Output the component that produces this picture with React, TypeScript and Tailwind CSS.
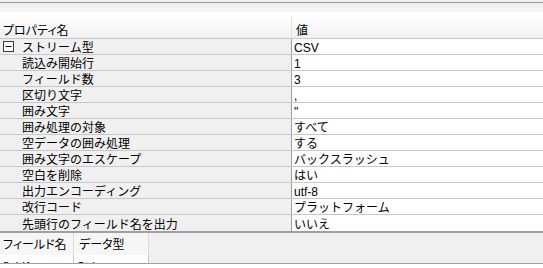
import React from "react";

const rows: { label: string; value: string; group?: boolean }[] = [
  { label: "ストリーム型", value: "CSV", group: true },
  { label: "読込み開始行", value: "1" },
  { label: "フィールド数", value: "3" },
  { label: "区切り文字", value: "," },
  { label: "囲み文字", value: "\"" },
  { label: "囲み処理の対象", value: "すべて" },
  { label: "空データの囲み処理", value: "する" },
  { label: "囲み文字のエスケープ", value: "バックスラッシュ" },
  { label: "空白を削除", value: "はい" },
  { label: "出力エンコーディング", value: "utf-8" },
  { label: "改行コード", value: "プラットフォーム" },
  { label: "先頭行のフィールド名を出力", value: "いいえ" },
];

const font = "font-['Liberation_Sans','Noto_Sans_CJK_JP',sans-serif]";
const palt = "[font-feature-settings:'palt']";

function MinusBox() {
  return (
    <svg width="11" height="11" viewBox="0 0 11 11" className="shrink-0">
      <rect x="0.5" y="0.5" width="10" height="10" fill="#fff" stroke="#3c3c3c" />
      <line x1="2.5" y1="5.5" x2="8.5" y2="5.5" stroke="#000" />
    </svg>
  );
}

export default function App() {
  return (
    <div className={`w-[543px] h-[268px] overflow-hidden bg-white text-[12px] text-black ${font}`}>
      {/* top strip */}
      <div className="h-[2px] bg-[#f0f0f0]" />
      <div className="h-px bg-[#a0a0a8]" />
      <div className="h-[5px] bg-[#f0f0f0]" />
      <div className="h-[4px] bg-[#f6f6f6]" />
      <div className="h-[4px] bg-white" />

      {/* header */}
      <div className={`flex h-[23px] border-b border-[#c8c8c8] bg-gradient-to-b from-white to-[#f1f1f3] ${palt}`}>
        <div className="w-[291px] flex items-end pl-[3px] pb-[1px] leading-[11px]">プロパティ名</div>
        <div className="w-px bg-white border-l border-[#e2e2e2]" />
        <div className="flex-1 flex items-end pl-[4px] pb-[1px] leading-[11px]">値</div>
      </div>

      {/* property rows */}
      {rows.map((r, i) => (
        <div
          key={r.label}
          className={`flex h-[16px] ${i === rows.length - 1 ? "" : "border-b border-[#c8c8c8]"}`}
        >
          <div className="w-[291px] flex items-center bg-[#f0f0f0] leading-[12px] whitespace-nowrap">
            {r.group ? (
              <div className="flex items-center pl-[3px] gap-[8px]">
                <MinusBox />
                <span className="pt-[3px]">{r.label}</span>
              </div>
            ) : (
              <span className="pl-[22px] pt-[3px]">{r.label}</span>
            )}
          </div>
          <div className="w-px bg-[#a0a0a0]" />
          <div className="flex-1 flex items-center pl-[2px] pt-[3px] leading-[12px] whitespace-nowrap">
            {r.value}
          </div>
        </div>
      ))}

      {/* bottom panel */}
      <div className="h-[2px] bg-[#a0a0a0]" />
      <div className={`h-[30px] bg-[#f0f0f0] overflow-hidden ${palt}`}>
        <div className="flex w-[149px] h-[22px] whitespace-nowrap">
          <div className="w-[74px] flex items-center pl-[3px] pt-[2px] bg-[#f6f6f6] border-r border-[#dcdcdc]">フィールド名</div>
          <div className="w-[75px] flex items-center pl-[5px] pt-[2px] bg-[#f6f6f6] border-r border-[#dcdcdc]">データ型</div>
        </div>
        <div className="flex w-[149px] h-[16px] bg-white whitespace-nowrap">
          <div className="w-[74px] pl-[3px] pt-[5px] leading-[15px] border-r border-[#c8c8c8]">field1</div>
          <div className="w-[75px] pl-[3px] pt-[5px] leading-[15px] border-r border-[#c8c8c8]">String</div>
        </div>
      </div>
      <div className="h-px bg-[#a0a0a0]" />
      <div className="h-[4px] bg-white" />
    </div>
  );
}
